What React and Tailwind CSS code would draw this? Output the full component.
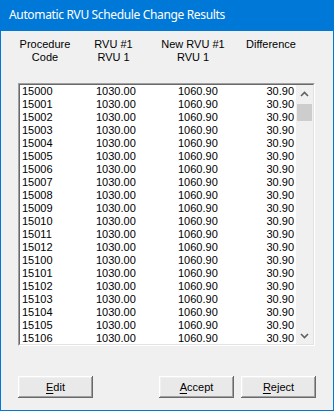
const rows = [
  '15000', '15001', '15002', '15003', '15004', '15005', '15006', '15007', '15008', '15009',
  '15010', '15011', '15012', '15100', '15101', '15102', '15103', '15104', '15105', '15106',
]

function Chevron({ down }) {
  return (
    <svg width="9" height="6" viewBox="0 0 9 6" className={down ? 'rotate-180' : ''}>
      <path d="M1 5 L4.5 1.5 L8 5" fill="none" stroke="#606060" strokeWidth="1.6" />
    </svg>
  )
}

function WinButton({ letter, rest }) {
  return (
    <button className="w-[75px] h-[22px] bg-[#e9e9e9] text-black text-[11px] shadow-[inset_-1px_-1px_0_#696969,inset_1px_1px_0_#ffffff,inset_-2px_-2px_0_#a0a0a0,inset_2px_2px_0_#f0f0f0] flex items-center justify-center">
      <span className="underline underline-offset-[2px]">{letter}</span>
      {rest}
    </button>
  )
}

export default function App() {
  return (
    <div
      className="w-[334px] h-[411px] bg-[#f0f0f0] border-x border-b border-[#0078d7] flex flex-col overflow-hidden"
      style={{ fontFamily: '"Liberation Sans", Arial, sans-serif' }}
    >
      {/* Title bar */}
      <div className="h-[31px] bg-[#0078d7] -mx-px shrink-0 flex items-center pl-[9px] pb-[2px]">
        <span className="text-white text-[12px] tracking-[-0.35px]" style={{ fontFamily: '"Noto Sans", sans-serif' }}>
          Automatic RVU Schedule Change Results
        </span>
      </div>

      {/* Column headers */}
      <div className="flex pl-[14px] mt-[7px] text-[11px] leading-[13px] text-black text-center">
        <div className="w-[60px]">Procedure<br />Code</div>
        <div className="w-[77px]">RVU #1<br />RVU 1</div>
        <div className="w-[82px]">New RVU #1<br />RVU 1</div>
        <div className="w-[74px]">Difference</div>
      </div>

      {/* List box */}
      <div className="ml-[17px] mt-[19px] w-[297px] h-[263px] border border-t-[#a0a0a0] border-l-[#a0a0a0] border-b-white border-r-white">
        <div className="w-full h-full border border-t-[#696969] border-l-[#696969] border-b-[#e3e3e3] border-r-[#e3e3e3] bg-white flex overflow-hidden">
          <div className="flex-1 flex flex-col text-[11px] leading-[13px] text-black">
            {rows.map((code) => (
              <div key={code} className="h-[13px] shrink-0 grid grid-cols-[74px_82px_1fr_auto] pl-[2px] pr-[2px]">
                <span>{code}</span>
                <span>1030.00</span>
                <span>1060.90</span>
                <span className="text-right">30.90</span>
              </div>
            ))}
          </div>
          {/* Scrollbar */}
          <div className="w-[17px] flex flex-col bg-[#f0f0f0] shrink-0">
            <div className="h-[17px] flex items-center justify-center">
              <Chevron />
            </div>
            <div className="h-[17px] mx-px mt-[2px] bg-[#cdcdcd]" />
            <div className="flex-1" />
            <div className="h-[17px] flex items-center justify-center">
              <Chevron down />
            </div>
          </div>
        </div>
      </div>

      {/* Buttons */}
      <div className="flex mt-[30px] pl-[17px]">
        <WinButton letter="E" rest="dit" />
        <div className="w-[66px]" />
        <WinButton letter="A" rest="ccept" />
        <div className="w-[7px]" />
        <WinButton letter="R" rest="eject" />
      </div>
    </div>
  )
}
